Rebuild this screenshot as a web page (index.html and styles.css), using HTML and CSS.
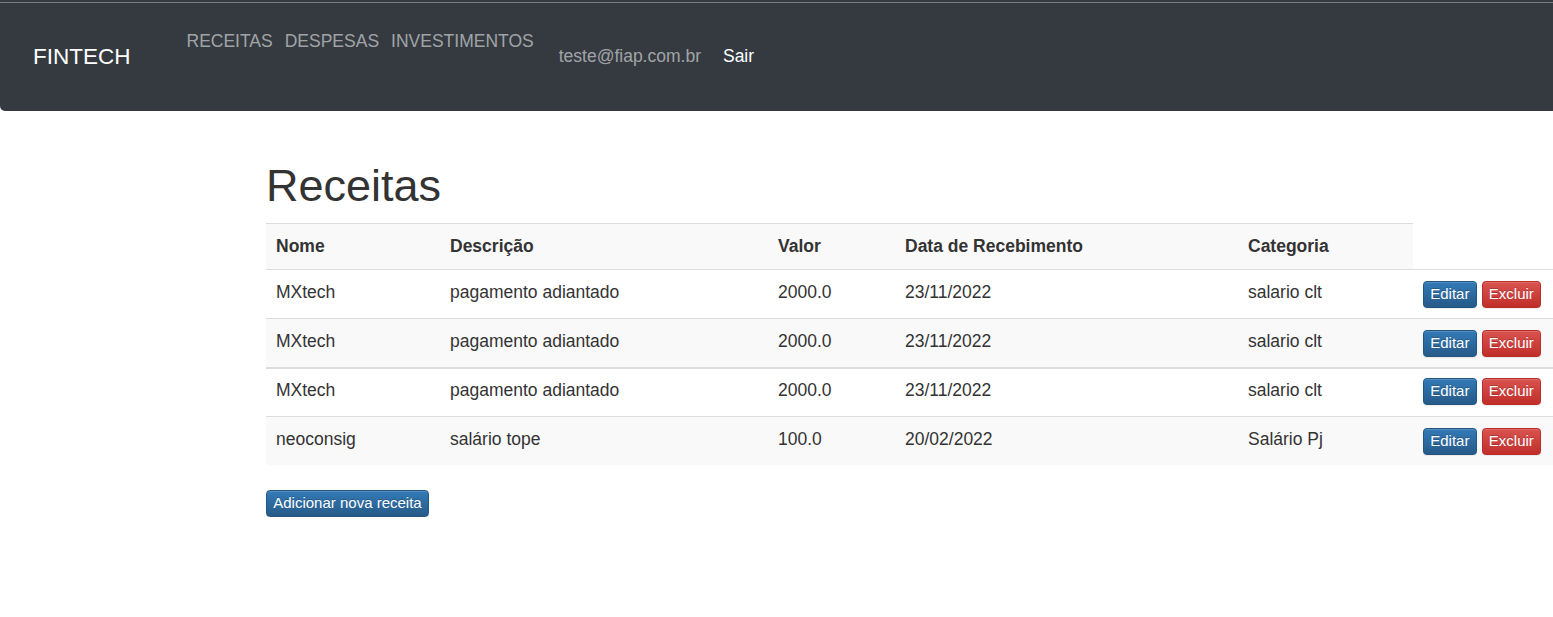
FILE: index.html
```html
<!DOCTYPE html>
<html lang="pt-BR">
<head>
<meta charset="utf-8">
<title>Receitas - FINTECH</title>
<link rel="stylesheet" href="styles.css">
</head>
<body>
<div class="topline"></div>
<nav class="navbar">
  <a class="brand" href="#">FINTECH</a>
  <ul class="nav-links">
    <li><a href="#">RECEITAS</a></li>
    <li><a href="#">DESPESAS</a></li>
    <li><a href="#">INVESTIMENTOS</a></li>
  </ul>
  <span class="user">teste@fiap.com.br</span>
  <a class="logout" href="#">Sair</a>
</nav>
<main class="content">
  <h1 class="title">Receitas</h1>
  <table class="grid">
    <colgroup>
      <col class="c-nome"><col class="c-desc"><col class="c-valor"><col class="c-data"><col class="c-cat"><col class="c-act">
    </colgroup>
    <tbody>
      <tr class="head">
        <th>Nome</th><th>Descrição</th><th>Valor</th><th>Data de Recebimento</th><th>Categoria</th>
      </tr>
      <tr>
        <td>MXtech</td><td>pagamento adiantado</td><td>2000.0</td><td>23/11/2022</td><td>salario clt</td>
        <td class="actions"><a class="btn btn-primary" href="#">Editar</a> <a class="btn btn-danger" href="#">Excluir</a></td>
      </tr>
      <tr class="striped">
        <td>MXtech</td><td>pagamento adiantado</td><td>2000.0</td><td>23/11/2022</td><td>salario clt</td>
        <td class="actions"><a class="btn btn-primary" href="#">Editar</a> <a class="btn btn-danger" href="#">Excluir</a></td>
      </tr>
      <tr class="thick">
        <td>MXtech</td><td>pagamento adiantado</td><td>2000.0</td><td>23/11/2022</td><td>salario clt</td>
        <td class="actions"><a class="btn btn-primary" href="#">Editar</a> <a class="btn btn-danger" href="#">Excluir</a></td>
      </tr>
      <tr class="striped">
        <td>neoconsig</td><td>salário tope</td><td>100.0</td><td>20/02/2022</td><td>Salário Pj</td>
        <td class="actions"><a class="btn btn-primary" href="#">Editar</a> <a class="btn btn-danger" href="#">Excluir</a></td>
      </tr>
    </tbody>
  </table>
  <a class="btn btn-primary" href="#">Adicionar nova receita</a>
</main>
</body>
</html>
```

FILE: styles.css
```css
* { box-sizing: border-box; }
html, body {
  margin: 0;
  background: #fff;
  font-family: "Liberation Sans", Arial, sans-serif;
  font-size: 17.5px;
  line-height: 1.42857;
  color: #333;
}
a { text-decoration: none; }

.topline {
  height: 3px;
  background: #343a40;
  border-bottom: 1px solid #7a7d80;
}

.navbar {
  display: flex;
  align-items: flex-start;
  height: 108px;
  background: #343a40;
  border-radius: 0 0 0 5px;
  padding-left: 33px;
}
.brand {
  color: #fff;
  font-size: 22.5px;
  line-height: 25px;
  margin-top: 41px;
}
.nav-links {
  display: flex;
  gap: 12px;
  list-style: none;
  margin: 26px 0 0 56px;
  padding: 0;
}
.nav-links a {
  color: rgba(255, 255, 255, 0.55);
  font-size: 17.5px;
  line-height: 25px;
}
.user {
  color: rgba(255, 255, 255, 0.55);
  margin: 41px 0 0 25px;
  line-height: 25px;
}
.logout {
  color: #fff;
  margin: 41px 0 0 22px;
  line-height: 25px;
}

.content {
  padding: 25px 0 0 266px;
}
.title {
  font-size: 45px;
  font-weight: 500;
  line-height: 1.1;
  margin: 25px 0 12.5px;
  color: #333;
}

.grid {
  border-collapse: collapse;
  table-layout: fixed;
  width: 1287px;
  margin-bottom: 25px;
}
.c-nome { width: 174px; }
.c-desc { width: 328px; }
.c-valor { width: 127px; }
.c-data { width: 343px; }
.c-cat { width: 175px; }
.c-act { width: 140px; }

.grid th, .grid td {
  padding: 10px 10px;
  text-align: left;
  vertical-align: top;
  border-top: 1px solid #ddd;
  white-space: nowrap;
}
.grid th { font-weight: bold; }
.grid td { padding-top: 10px; padding-bottom: 13px; }
.grid .head th { background: #f9f9f9; }
.grid .striped td { background: #f9f9f9; }
.grid .thick td { border-top: 2px solid #ddd; padding-top: 9px; }
.grid .actions { padding-top: 11px; padding-bottom: 10px; }

.btn {
  display: inline-block;
  padding: 1.25px 6.25px;
  font-size: 15px;
  line-height: 1.5;
  border: 1.25px solid transparent;
  border-radius: 3.75px;
  color: #fff;
  text-shadow: 0 -1px 0 rgba(0, 0, 0, 0.2);
  box-shadow: inset 0 1px 0 rgba(255, 255, 255, 0.15), 0 1px 1px rgba(0, 0, 0, 0.075);
  vertical-align: middle;
}
.btn-primary {
  background-image: linear-gradient(to bottom, #337ab7 0, #265a88 100%);
  border-color: #245580;
}
.btn-danger {
  background-image: linear-gradient(to bottom, #d9534f 0, #c12e2a 100%);
  border-color: #b92c28;
}
```
